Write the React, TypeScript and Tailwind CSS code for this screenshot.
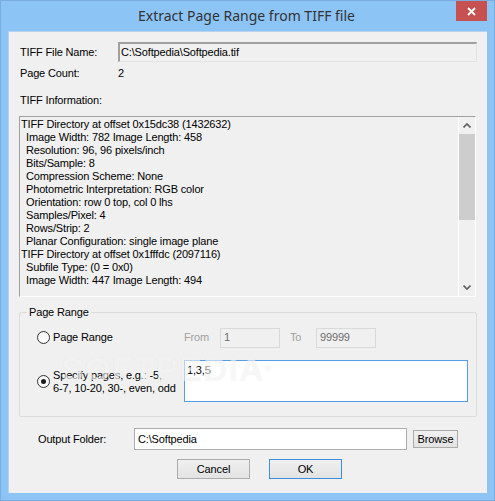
import React from 'react';

const FONT = { fontFamily: '"Liberation Sans", Arial, sans-serif' };

const TIFF_INFO: { text: string; indent?: boolean }[] = [
  { text: 'TIFF Directory at offset 0x15dc38 (1432632)' },
  { text: 'Image Width: 782 Image Length: 458', indent: true },
  { text: 'Resolution: 96, 96 pixels/inch', indent: true },
  { text: 'Bits/Sample: 8', indent: true },
  { text: 'Compression Scheme: None', indent: true },
  { text: 'Photometric Interpretation: RGB color', indent: true },
  { text: 'Orientation: row 0 top, col 0 lhs', indent: true },
  { text: 'Samples/Pixel: 4', indent: true },
  { text: 'Rows/Strip: 2', indent: true },
  { text: 'Planar Configuration: single image plane', indent: true },
  { text: 'TIFF Directory at offset 0x1fffdc (2097116)' },
  { text: 'Subfile Type: (0 = 0x0)', indent: true },
  { text: 'Image Width: 447 Image Length: 494', indent: true },
];

function Radio({ checked }: { checked?: boolean }) {
  return (
    <span className="w-[13px] h-[13px] shrink-0 rounded-full border border-[#333333] bg-gradient-to-b from-[#f4f4f4] to-white flex items-center justify-center">
      {checked && <span className="w-[5px] h-[5px] rounded-full bg-[#1c1c1c]" />}
    </span>
  );
}

function Chevron({ down }: { down?: boolean }) {
  return (
    <svg width="8" height="5" viewBox="0 0 8 5" className={down ? 'rotate-180' : ''}>
      <path d="M0.5 4.5 L4 1 L7.5 4.5" fill="none" stroke="#606060" strokeWidth="1.6" />
    </svg>
  );
}

function Button({ children, w, focused }: { children: React.ReactNode; w: string; focused?: boolean }) {
  return (
    <div
      className={`${w} h-full flex items-center justify-center border bg-gradient-to-b from-[#f0f0f0] to-[#e3e3e3] text-black ${
        focused ? 'border-[#3c8fe0]' : 'border-[#acacac]'
      }`}
    >
      {children}
    </div>
  );
}

export default function App() {
  return (
    <div
      className="w-[495px] h-[501px] flex flex-col bg-[#8cc4f6] border border-[#79addf] px-[7px] pb-[7px] text-[11px] leading-[13px] tracking-[-0.15px] text-black overflow-hidden"
      style={FONT}
    >
      {/* title bar */}
      <div className="relative h-[30px] shrink-0 flex items-center justify-center">
        <span
          className="text-[14px] leading-[18px] tracking-normal text-[#333333] pr-[2px]"
          style={{ fontFamily: '"Noto Sans", "Liberation Sans", sans-serif' }}
        >
          Extract Page Range from TIFF file
        </span>
        <div className="absolute right-0 top-0 w-[31px] h-[20px] bg-[#c75050] flex items-center justify-center">
          <svg width="9" height="9" viewBox="0 0 9 9">
            <path d="M1 1 L8 8 M8 1 L1 8" stroke="#ffffff" strokeWidth="1.8" />
          </svg>
        </div>
      </div>

      {/* client area */}
      <div className="relative flex-1 bg-[#f0f0f0] border-t border-l border-[#b9d1ea] pl-[10px] flex flex-col">
        {/* TIFF File Name */}
        <div className="mt-[10px] h-[20px] flex items-center">
          <span className="w-[99px] pl-[1px]">TIFF File Name:</span>
          <div className="w-[359px] h-full border-t-2 border-l-2 border-[#a0a0a0] border-b border-r border-b-[#e3e3e3] border-r-[#e3e3e3] flex items-center pl-[1px]">
            C:\Softpedia\Softpedia.tif
          </div>
        </div>

        {/* Page Count */}
        <div className="mt-[1px] h-[20px] flex items-center">
          <span className="w-[99px] pl-[1px]">Page Count:</span>
          <span>2</span>
        </div>

        {/* TIFF Information */}
        <div className="mt-[7px] h-[20px] flex items-center pl-[1px]">TIFF Information:</div>

        <div className="mt-[6px] w-[457px] h-[181px] flex border-t border-l border-[#a0a0a0] border-b border-r border-b-white border-r-white">
          <div className="flex-1 pl-[1px] pt-[1px] overflow-hidden">
            {TIFF_INFO.map((line, i) => (
              <div key={i} className={`h-[13px] whitespace-nowrap ${line.indent ? 'pl-[5px]' : ''}`}>
                {line.text}
              </div>
            ))}
          </div>
          <div className="w-[17px] h-full border-l border-[#ffffff] flex flex-col">
            <div className="h-[17px] flex items-center justify-center">
              <Chevron />
            </div>
            <div className="h-[86px] bg-[#cdcdcd]" />
            <div className="flex-1" />
            <div className="h-[17px] flex items-center justify-center">
              <Chevron down />
            </div>
          </div>
        </div>

        {/* Page Range group */}
        <fieldset className="mt-[9px] w-[458px] border border-[#dcdcdc] rounded-[2px] pb-[14px]">
          <legend className="ml-[7px] px-[2px] leading-[13px]">Page Range</legend>

          <div className="mt-[8px] h-[21px] flex items-center">
            <div className="w-[164px] pl-[17px] flex items-center gap-[3px]">
              <Radio />
              <span>Page Range</span>
            </div>
            <span className="w-[36px] text-[#a0a0a0]">From</span>
            <div className="w-[60px] h-[20px] border border-[#d9d9d9] text-[#6d6d6d] flex items-center pl-[3px]">1</div>
            <span className="ml-[10px] w-[26px] text-[#a0a0a0]">To</span>
            <div className="w-[60px] h-[20px] border border-[#d9d9d9] text-[#6d6d6d] flex items-center pl-[3px]">99999</div>
          </div>

          <div className="mt-[12px] h-[42px] flex items-center">
            <div className="w-[164px] pl-[17px] flex items-center gap-[3px]">
              <Radio checked />
              <span className="leading-[13px] pt-[1px] whitespace-nowrap">
                Specify pages, e.g.: -5,
                <br />
                6-7, 10-20, 30-, even, odd
              </span>
            </div>
            <div className="w-[284px] h-full bg-white border border-[#569de5] pl-[2px] pt-[3px]">1,3,5</div>
          </div>
        </fieldset>

        {/* Output folder */}
        <div className="mt-[11px] h-[22px] flex items-center">
          <span className="w-[115px] pl-[19px]">Output Folder:</span>
          <div className="w-[273px] h-full bg-white border border-[#abadb3] flex items-center pl-[3px]">C:\Softpedia</div>
          <div className="ml-[6px] h-[18px]">
            <Button w="w-[45px]">Browse</Button>
          </div>
        </div>

        {/* buttons */}
        <div className="mt-[9px] h-[20px] flex pl-[158px] gap-[19px]">
          <Button w="w-[73px]">Cancel</Button>
          <Button w="w-[73px]" focused>
            OK
          </Button>
        </div>

        {/* watermark */}
        <div
          className="absolute left-[52px] top-[320px] text-[34px] leading-[34px] font-bold tracking-[1px] text-white/60 pointer-events-none select-none"
          style={{ textShadow: '0 0 1px rgba(0,0,0,0.08)' }}
        >
          SOFTPEDIA
          <span className="text-[9px] align-top">®</span>
        </div>
      </div>
    </div>
  );
}
